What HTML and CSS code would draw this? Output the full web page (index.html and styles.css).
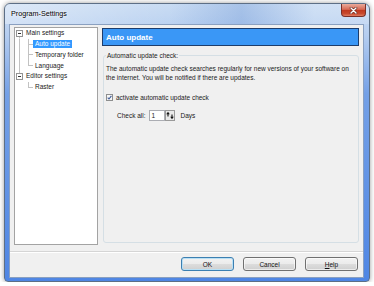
FILE: index.html
```html
<!DOCTYPE html>
<html lang="en">
<head>
    <meta charset="UTF-8">
    <meta name="viewport" content="width=device-width, initial-scale=1.0">
    <title>Program-Settings</title>
    <link rel="stylesheet" href="styles.css">
</head>
<body>
    <div class="window">
        <!-- Title bar -->
        <div class="titlebar">
            <span class="title">Program-Settings</span>
            <span class="close-btn">
                <svg width="9" height="7" viewBox="0 0 9 7">
                    <path d="M2 1 L7 6 M7 1 L2 6" stroke="#6b2a20" stroke-width="2.6" stroke-linecap="round"/>
                    <path d="M2 1 L7 6 M7 1 L2 6" stroke="#fff" stroke-width="1.4" stroke-linecap="round"/>
                </svg>
            </span>
        </div>

        <div class="client">
            <div class="main">
                <!-- Navigation tree -->
                <div class="tree">
                    <div class="row"><span class="cell exp first"><i class="box"></i></span><span class="label">Main settings</span></div>
                    <div class="row"><span class="cell vline"></span><span class="cell tee"></span><span class="label sel">Auto update</span></div>
                    <div class="row"><span class="cell vline"></span><span class="cell tee"></span><span class="label">Temporary folder</span></div>
                    <div class="row"><span class="cell vline"></span><span class="cell ell"></span><span class="label">Language</span></div>
                    <div class="row"><span class="cell exp last"><i class="box"></i></span><span class="label">Editor settings</span></div>
                    <div class="row"><span class="cell"></span><span class="cell ell"></span><span class="label">Raster</span></div>
                </div>

                <!-- Settings page -->
                <div class="panel">
                    <div class="panel-head">Auto update</div>
                    <fieldset class="group">
                        <legend>Automatic update check:</legend>
                        <p class="info">The automatic update check searches regularly for new versions of your software on the internet. You will be notified if there are updates.</p>

                        <div class="check-row">
                            <span class="checkbox">
                                <svg width="7" height="7" viewBox="0 0 7 7">
                                    <rect x="0.5" y="0.5" width="6" height="6" fill="#f6f6f6" stroke="#8e8f8f"/>
                                    <path d="M1.7 3.6 L3 5 L5.4 1.8" fill="none" stroke="#3d5a96" stroke-width="1.1"/>
                                </svg>
                            </span>
                            activate automatic update check
                        </div>

                        <div class="interval-row">
                            <span>Check all:</span>
                            <span class="num-input">1</span>
                            <span class="spin">
                                <svg width="10" height="11" viewBox="0 0 10 11">
                                    <rect x="0.5" y="0.5" width="9" height="10" fill="#e9e9e9" stroke="#9a9a9a"/>
                                    <path d="M3 1.8 L4.8 4.2 H1.2 Z" fill="#111"/>
                                    <path d="M3 4 V6.5" stroke="#111" stroke-width="1.1"/>
                                    <path d="M7 9.2 L5.2 6.8 H8.8 Z" fill="#111"/>
                                    <path d="M7 4.5 V7" stroke="#111" stroke-width="1.1"/>
                                </svg>
                            </span>
                            <span class="unit">Days</span>
                        </div>
                    </fieldset>
                </div>
            </div>

            <!-- Dialog buttons -->
            <div class="footer">
                <button class="btn default">OK</button>
                <button class="btn">Cancel</button>
                <button class="btn"><u>H</u>elp</button>
            </div>
        </div>
    </div>
</body>
</html>
```

FILE: styles.css
```css
/* General */
body {
    margin: 0;
    background-color: #fff;
    font-family: "Liberation Sans", Arial, sans-serif;
    font-size: 6.5px;
    color: #1a1a1a;
}

/* Window frame */
.window {
    margin: 3px 0 0 4px;
    width: 366px;
    height: 279px;
    box-sizing: border-box;
    border: 1px solid #5d6f86;
    border-radius: 6px 6px 4px 4px;
    background: linear-gradient(to bottom, #c9dcf3 0, #b6cef0 30px, #74a0e6 90px, #4f86e4 100%);
    box-shadow: 0 0 5px rgba(0, 0, 0, 0.4);
    padding: 0 5px 3px 4px;
    display: flex;
    flex-direction: column;
}

.titlebar {
    height: 20px;
    margin: 0 -5px 0 -4px;
    padding: 0 4px 0 5px;
    display: flex;
    align-items: flex-start;
    border-radius: 5px 5px 0 0;
    background: linear-gradient(to right, rgba(255, 255, 255, 0.35), rgba(255, 255, 255, 0) 45%, rgba(70, 120, 200, 0.25) 65%, rgba(255, 255, 255, 0.15) 85%);
}

.title {
    font-size: 7.2px;
    line-height: 9px;
    padding: 5px 0 0 1px;
    color: #000;
    text-shadow: 0 0 4px #fff, 0 0 2px #fff;
}

.close-btn {
    margin-left: auto;
    margin-right: -1px;
    width: 25px;
    height: 13px;
    box-sizing: border-box;
    border: 1px solid #7a3028;
    border-top: none;
    border-radius: 0 0 4px 4px;
    background: linear-gradient(#e9ab9c, #d76a55 45%, #c0381e 52%, #c84a2e 80%, #e07c60);
    display: flex;
    align-items: center;
    justify-content: center;
}

/* Client area */
.client {
    flex: 1;
    border: 1px solid #8aa0c0;
    background-color: #f0f0f0;
    padding: 2px 4px 0;
    display: flex;
    flex-direction: column;
}

.main {
    height: 218px;
    display: flex;
    gap: 4px;
}

/* Tree */
.tree {
    width: 84px;
    flex: none;
    box-sizing: border-box;
    border: 1px solid #a3a3a3;
    background-color: #fff;
}

.row {
    height: 10.8px;
    display: flex;
    align-items: center;
}

.cell {
    width: 9px;
    height: 100%;
    flex: none;
    display: flex;
    align-items: center;
    justify-content: center;
    background-repeat: no-repeat;
}

.vline {
    background-image: linear-gradient(#c2c2c2, #c2c2c2);
    background-position: 4px 0;
    background-size: 1px 100%;
}

.tee {
    background-image: linear-gradient(#c2c2c2, #c2c2c2), linear-gradient(#c2c2c2, #c2c2c2);
    background-position: 4px 0, 4px 50%;
    background-size: 1px 100%, 5px 1px;
}

.ell {
    background-image: linear-gradient(#c2c2c2, #c2c2c2), linear-gradient(#c2c2c2, #c2c2c2);
    background-position: 4px 0, 4px 50%;
    background-size: 1px 50%, 5px 1px;
}

.exp.first {
    background-image: linear-gradient(#c2c2c2, #c2c2c2);
    background-position: 4px 100%;
    background-size: 1px 50%;
}

.exp.last {
    background-image: linear-gradient(#c2c2c2, #c2c2c2);
    background-position: 4px 0;
    background-size: 1px 50%;
}

.box {
    width: 7px;
    height: 7px;
    box-sizing: border-box;
    border: 1px solid #939393;
    background: #fff linear-gradient(#333, #333) no-repeat center / 3px 1px;
}

.label {
    padding: 0 2px;
    line-height: 8.5px;
    white-space: nowrap;
}

.label.sel {
    background-color: #3399ff;
    color: #fff;
}

/* Settings panel */
.panel {
    flex: 1;
    padding: 1px 0 2px;
    display: flex;
    flex-direction: column;
}

.panel-head {
    height: 18px;
    box-sizing: border-box;
    border: 1px solid #1e3d6b;
    background-color: #3a97f6;
    color: #fff;
    font-weight: bold;
    font-size: 8px;
    padding-left: 3px;
    display: flex;
    align-items: center;
}

.group {
    flex: 1;
    min-width: 0;
    margin: 5px 0 0 1px;
    border: 1px solid #d5dfe5;
    border-radius: 3px;
    padding: 4px 2px 0 2px;
}

.group legend {
    padding: 0 1px;
    line-height: 9px;
}

.info {
    margin: 0;
    line-height: 9px;
}

.check-row {
    height: 9px;
    margin-top: 11px;
    display: flex;
    align-items: center;
    gap: 3px;
}

.checkbox {
    display: flex;
}

.interval-row {
    height: 11px;
    margin-top: 8px;
    padding-left: 11px;
    display: flex;
    align-items: center;
}

.num-input {
    width: 16px;
    height: 11px;
    box-sizing: border-box;
    margin-left: 3px;
    border: 1px solid #abadb3;
    background-color: #fff;
    padding-left: 2px;
    line-height: 9px;
}

.spin {
    display: flex;
}

.unit {
    margin-left: 6px;
}

/* Buttons */
.footer {
    margin: 6px -4px 0;
    border-top: 1px solid #d5d5d5;
    box-shadow: inset 0 1px #fff;
    padding: 5px 5px 6px;
    display: flex;
    justify-content: flex-end;
    gap: 9px;
}

.btn {
    width: 53px;
    height: 14px;
    padding: 0;
    font-family: inherit;
    font-size: 6.5px;
    color: #111;
    border: 1px solid #707070;
    border-radius: 3px;
    background: linear-gradient(#f2f2f2, #ebebeb 50%, #dddddd 50%, #cfcfcf);
    box-shadow: inset 0 0 0 1px rgba(255, 255, 255, 0.6);
}

.btn.default {
    border-color: #3c7fb1;
    box-shadow: inset 0 0 0 1px #b9e0f5;
}
```
